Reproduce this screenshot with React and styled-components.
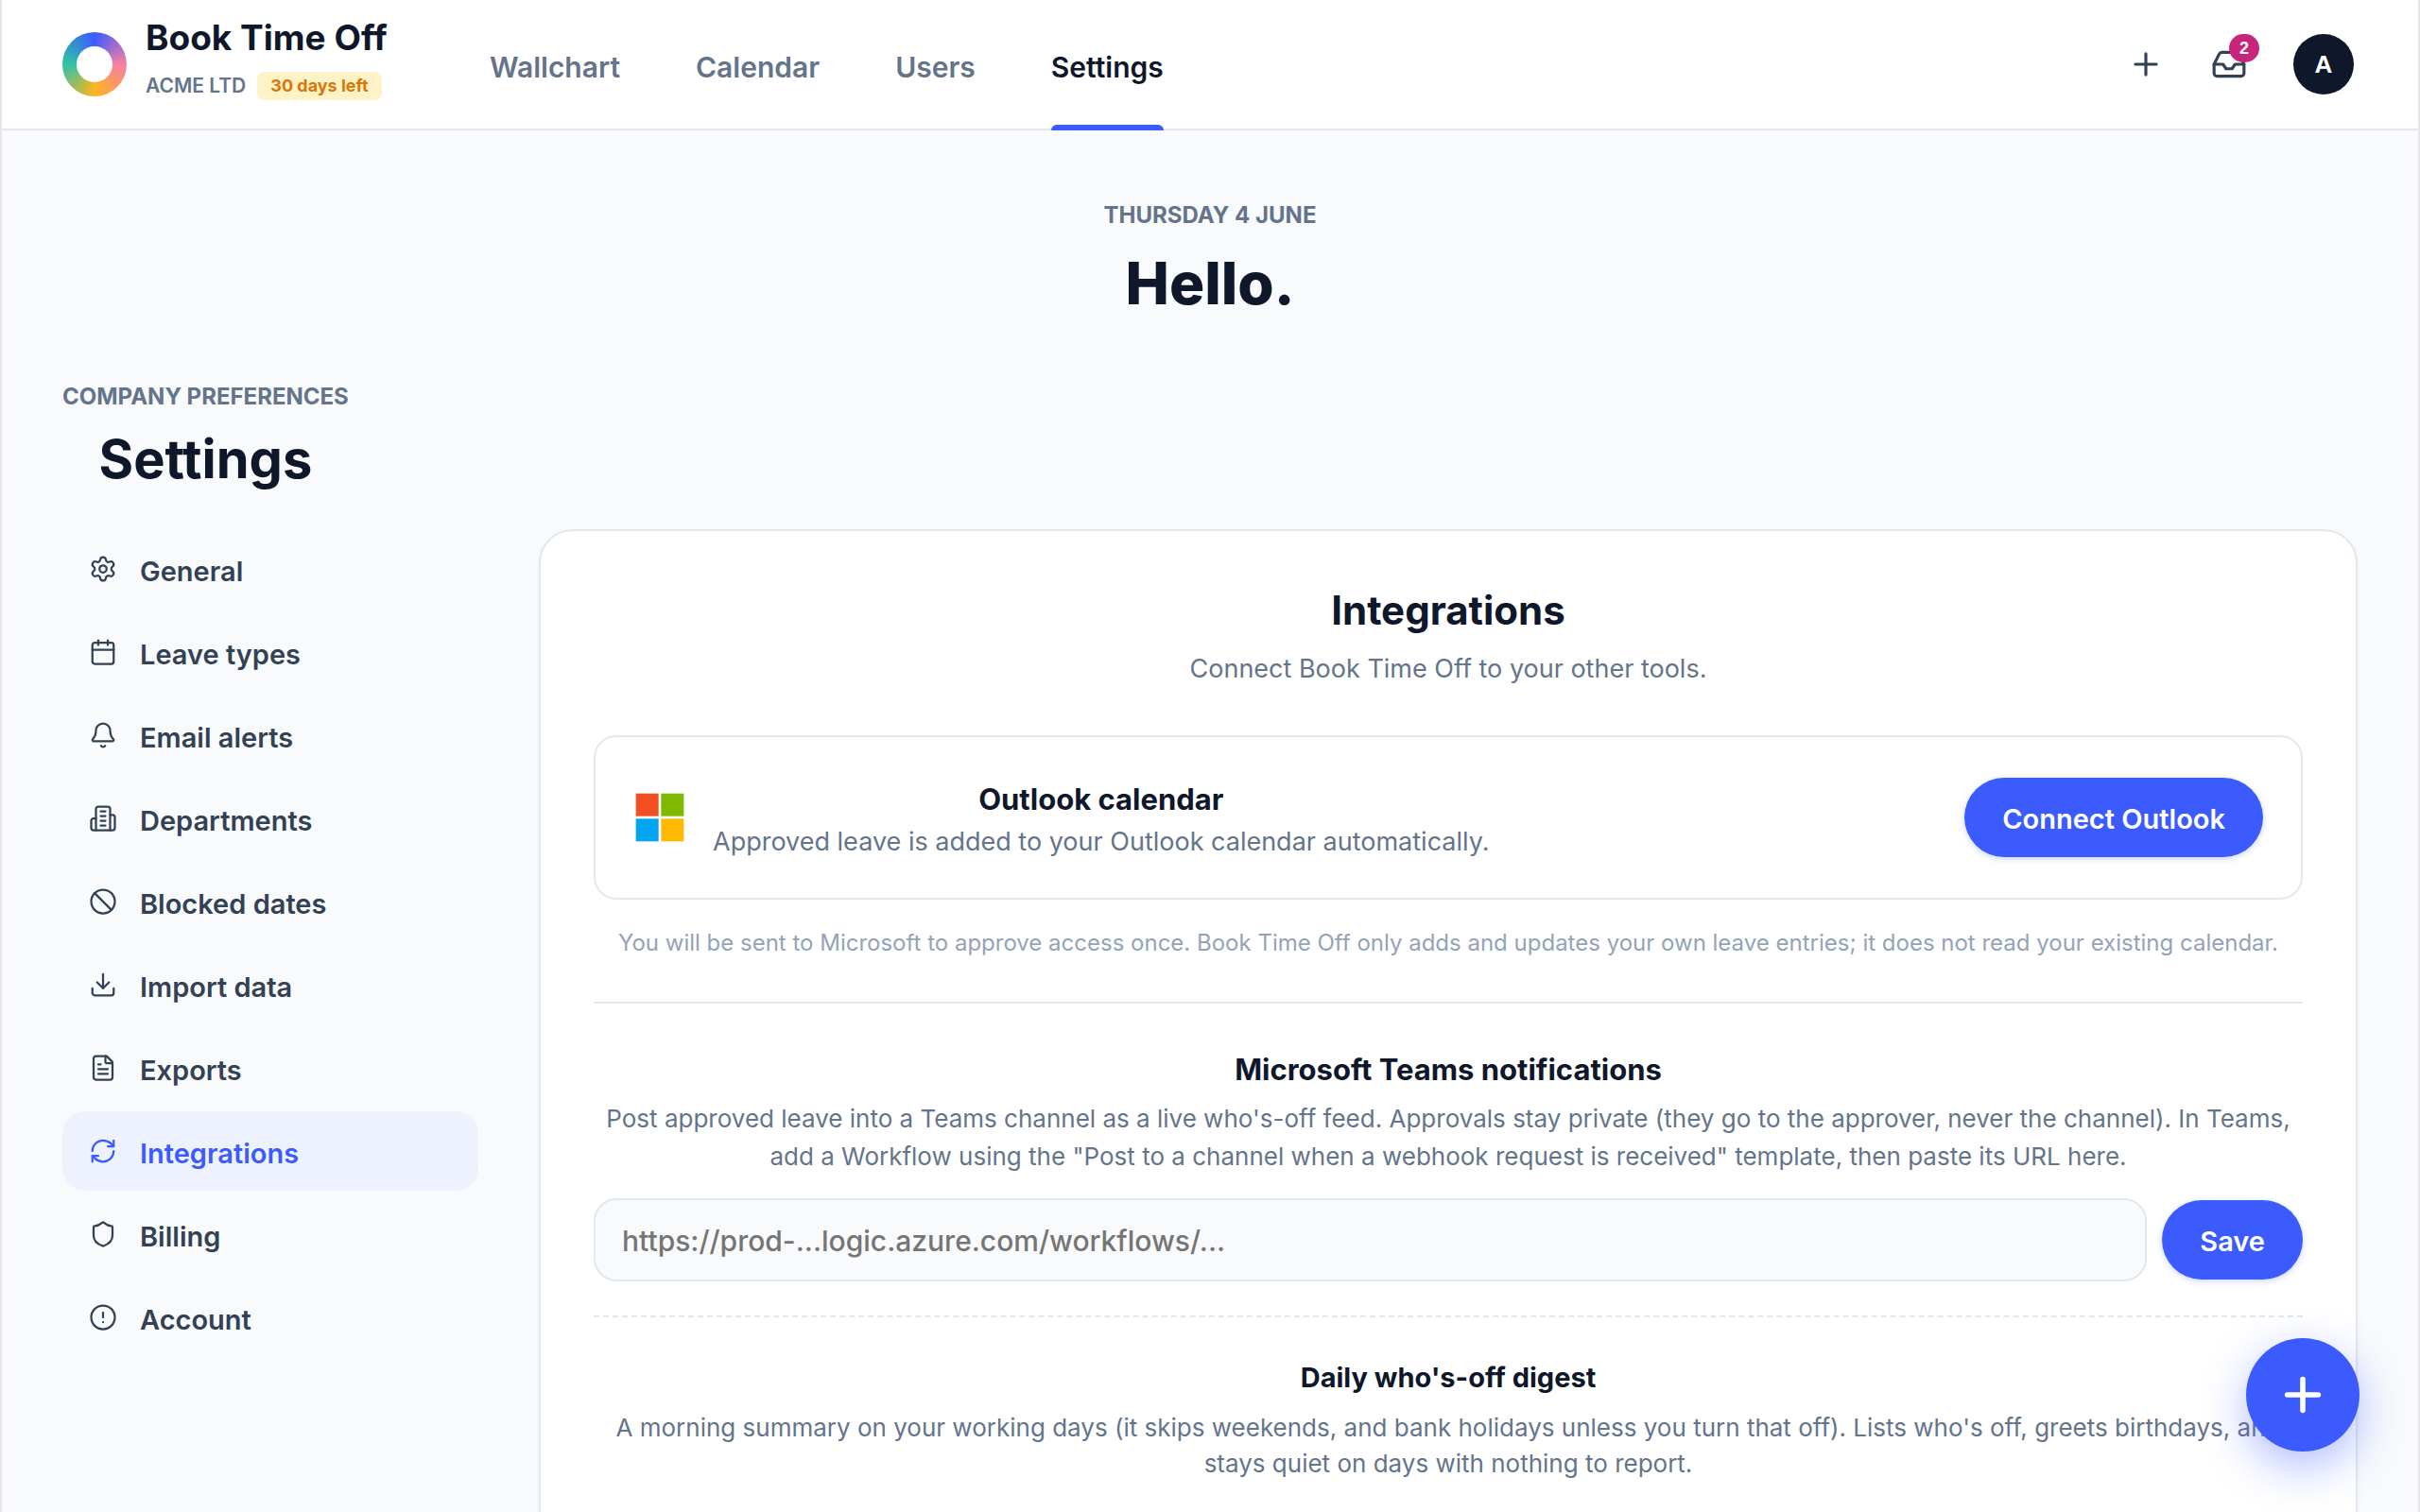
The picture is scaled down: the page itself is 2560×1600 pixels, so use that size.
import styled, { createGlobalStyle } from "styled-components";
import { Settings, Calendar, Bell, Ban, Download, FileText, RefreshCw, Shield, CircleAlert, Plus, Inbox } from "lucide-react";

const links = ["Wallchart", "Calendar", "Users", "Settings"];

const menu = [
    { label: "General", icon: Settings },
    { label: "Leave types", icon: Calendar },
    { label: "Email alerts", icon: Bell },
    { label: "Departments", icon: Building },
    { label: "Blocked dates", icon: Ban },
    { label: "Import data", icon: Download },
    { label: "Exports", icon: FileText },
    { label: "Integrations", icon: RefreshCw },
    { label: "Billing", icon: Shield },
    { label: "Account", icon: CircleAlert },
];

function Building({ size, strokeWidth }){
    return (
        <svg width={size} height={size} viewBox="0 0 24 24" fill="none" stroke="currentColor" strokeWidth={strokeWidth} strokeLinecap="round" strokeLinejoin="round">
            <path d="M6 22V4a2 2 0 0 1 2-2h8a2 2 0 0 1 2 2v18Z" />
            <path d="M6 12H4a2 2 0 0 0-2 2v6a2 2 0 0 0 2 2h2" />
            <path d="M18 9h2a2 2 0 0 1 2 2v9a2 2 0 0 1-2 2h-2" />
            <path d="M10 6h4M10 10h4M10 14h4M10 18h4" />
        </svg>
    );
}

function MicrosoftLogo(){
    return (
        <svg width="56" height="56" viewBox="0 0 21 21" aria-hidden="true">
            <rect x="1" y="1" width="9" height="9" fill="#f25022" />
            <rect x="11" y="1" width="9" height="9" fill="#7fba00" />
            <rect x="1" y="11" width="9" height="9" fill="#00a4ef" />
            <rect x="11" y="11" width="9" height="9" fill="#ffb900" />
        </svg>
    );
}

export default function App(){
    return (
        <Page>
            <GlobalStyle />
            <Header>
                <Ring />
                <Brand>
                    <BrandName>Book Time Off</BrandName>
                    <BrandInfo>
                        <Company>ACME LTD</Company>
                        <Trial>30 days left</Trial>
                    </BrandInfo>
                </Brand>
                <TopNav>
                    {links.map(l => <TopLink key={l} href="#" $active={l === "Settings"}>{l}</TopLink>)}
                </TopNav>
                <Actions>
                    <IconButton aria-label="Add"><Plus size={38} strokeWidth={2} /></IconButton>
                    <IconButton aria-label="Requests">
                        <Inbox size={38} strokeWidth={2} />
                        <Count>2</Count>
                    </IconButton>
                    <Avatar>A</Avatar>
                </Actions>
            </Header>
            <Main>
                <Hero>
                    <Eyebrow>THURSDAY 4 JUNE</Eyebrow>
                    <Greeting>Hello.</Greeting>
                </Hero>
                <PageHead>
                    <Eyebrow>COMPANY PREFERENCES</Eyebrow>
                    <PageTitle>Settings</PageTitle>
                </PageHead>
                <Columns>
                    <SideNav>
                        {menu.map(({ label, icon: Icon }) => (
                            <SideLink key={label} href="#" $active={label === "Integrations"}>
                                <Icon size={30} strokeWidth={1.8} />
                                <SideLabel>{label}</SideLabel>
                            </SideLink>
                        ))}
                    </SideNav>
                    <Card>
                        <CardTitle>Integrations</CardTitle>
                        <CardSubtitle>Connect Book Time Off to your other tools.</CardSubtitle>
                        <Provider>
                            <MicrosoftLogo />
                            <ProviderText>
                                <ProviderName>Outlook calendar</ProviderName>
                                <ProviderInfo>Approved leave is added to your Outlook calendar automatically.</ProviderInfo>
                            </ProviderText>
                            <Button>Connect Outlook</Button>
                        </Provider>
                        <Note>You will be sent to Microsoft to approve access once. Book Time Off only adds and updates your own leave entries; it does not read your existing calendar.</Note>
                        <Teams>
                            <TeamsTitle>Microsoft Teams notifications</TeamsTitle>
                            <TeamsInfo>Post approved leave into a Teams channel as a live who's-off feed. Approvals stay private (they go to the approver, never the channel). In Teams, add a Workflow using the "Post to a channel when a webhook request is received" template, then paste its URL here.</TeamsInfo>
                            <WebhookForm onSubmit={e => e.preventDefault()}>
                                <UrlInput type="url" aria-label="Teams workflow URL" placeholder="https://prod-...logic.azure.com/workflows/..." />
                                <Button type="submit">Save</Button>
                            </WebhookForm>
                        </Teams>
                        <Digest>
                            <DigestTitle>Daily who's-off digest</DigestTitle>
                            <DigestInfo>A morning summary on your working days (it skips weekends, and bank holidays unless you turn that off). Lists who's off, greets birthdays, and stays quiet on days with nothing to report.</DigestInfo>
                        </Digest>
                    </Card>
                </Columns>
            </Main>
            <Fab aria-label="Book time off"><Plus size={56} strokeWidth={2.4} /></Fab>
        </Page>
    );
}

const GlobalStyle = createGlobalStyle`
    *{
        box-sizing: border-box;
    }
    body{
        margin: 0;
        background-color: #F8FAFC;
        font-family: 'Inter', sans-serif;
        color: #0F172A;
    }
    h1, h2, h3, h4, p{
        margin: 0;
    }
    a{
        text-decoration: none;
    }
    button, input{
        font-family: inherit;
    }
    button{
        cursor: pointer;
    }
    svg{
        flex-shrink: 0;
    }
`;
const Page = styled.div`
    height: 100vh;
    display: flex;
    flex-direction: column;
    border: 0 solid #E5E5EA;
    border-width: 0 2px;
`;
const Header = styled.header`
    height: 138px;
    flex-shrink: 0;
    display: flex;
    align-items: center;
    padding: 0 64px;
    background-color: #FFFFFF;
    border-bottom: 2px solid #E2E8F0;
`;
const Ring = styled.div`
    width: 68px;
    height: 68px;
    border-radius: 50%;
    background: conic-gradient(#3B5BFF, #F77FA3 25%, #FDB51E 50%, #2EC4A6 75%, #3B5BFF);
    display: flex;
    align-items: center;
    justify-content: center;
    &::after{
        content: '';
        width: 38px;
        height: 38px;
        border-radius: 50%;
        background-color: #FFFFFF;
    }
`;
const Brand = styled.div`
    align-self: flex-start;
    padding-top: 10px;
    margin-left: 20px;
    min-width: 256px;
`;
const BrandName = styled.div`
    font-weight: 700;
    font-size: 37px;
    line-height: 60px;
    white-space: nowrap;
`;
const BrandInfo = styled.div`
    display: flex;
    align-items: center;
    gap: 12px;
    margin-top: 6px;
    white-space: nowrap;
`;
const Company = styled.span`
    font-weight: 600;
    font-size: 21px;
    line-height: 30px;
    color: #64748B;
`;
const Trial = styled.span`
    padding: 0 14px;
    border-radius: 8px;
    background-color: #FEF3C7;
    font-weight: 700;
    font-size: 18px;
    line-height: 30px;
    color: #D97706;
`;
const TopNav = styled.nav`
    align-self: stretch;
    display: flex;
    gap: 80px;
    margin-left: 108px;
    margin-bottom: -2px;
`;
const TopLink = styled.a`
    position: relative;
    display: flex;
    align-items: center;
    padding-top: 4px;
    font-weight: 600;
    font-size: 30px;
    color: ${props => props.$active ? '#0F172A' : '#64748B'};
    &::after{
        content: '';
        display: ${props => props.$active ? 'block' : 'none'};
        position: absolute;
        left: 0;
        right: 0;
        bottom: 0;
        height: 6px;
        border-radius: 6px 6px 0 0;
        background-color: #3B5BFF;
    }
`;
const Actions = styled.div`
    display: flex;
    align-items: center;
    gap: 16px;
    margin-left: auto;
    padding-right: 4px;
`;
const IconButton = styled.button`
    position: relative;
    width: 72px;
    height: 72px;
    padding: 0;
    display: flex;
    align-items: center;
    justify-content: center;
    border: none;
    background: none;
    color: #334155;
`;
const Count = styled.span`
    position: absolute;
    top: 4px;
    right: 4px;
    min-width: 32px;
    height: 30px;
    border-radius: 16px;
    background-color: #C7247B;
    font-family: 'Liberation Sans', sans-serif;
    font-weight: 700;
    font-size: 18px;
    line-height: 30px;
    text-align: center;
    color: #FFFFFF;
`;
const Avatar = styled.button`
    width: 64px;
    height: 64px;
    margin-left: 16px;
    padding: 0;
    border: none;
    border-radius: 50%;
    background-color: #0F172A;
    font-family: 'Liberation Sans', sans-serif;
    font-weight: 700;
    font-size: 26px;
    color: #FFFFFF;
`;
const Main = styled.main`
    flex: 1;
    min-height: 0;
    overflow-y: auto;
    scrollbar-width: none;
    padding: 74px 64px 64px 64px;
`;
const Hero = styled.div`
    text-align: center;
`;
const Eyebrow = styled.p`
    font-weight: 700;
    font-size: 24px;
    line-height: 32px;
    color: #64748B;
`;
const Greeting = styled.h1`
    margin-top: 16px;
    font-weight: 800;
    font-size: 62px;
    line-height: 80px;
`;
const PageHead = styled.div`
    width: fit-content;
    margin-top: 64px;
    text-align: center;
`;
const PageTitle = styled.h2`
    margin-top: 16px;
    font-weight: 700;
    font-size: 56px;
    line-height: 68px;
`;
const Columns = styled.div`
    display: grid;
    grid-template-columns: 440px minmax(0, 1fr);
    align-items: start;
    gap: 64px;
    margin-top: 40px;
`;
const SideNav = styled.nav`
    display: flex;
    flex-direction: column;
    gap: 4px;
`;
const SideLink = styled.a`
    height: 84px;
    display: flex;
    align-items: center;
    gap: 24px;
    padding: 0 28px;
    border-radius: 24px;
    font-weight: 600;
    font-size: 29px;
    color: ${props => props.$active ? '#3B5BFF' : '#334155'};
    background-color: ${props => props.$active ? '#EEF2FF' : 'transparent'};
`;
const SideLabel = styled.span`
    padding-top: 4px;
`;
const Card = styled.section`
    padding: 56px;
    border: 2px solid #E2E8F0;
    border-radius: 36px;
    background-color: #FFFFFF;
    box-shadow: 0 2px 6px rgba(15, 23, 42, 0.04);
    text-align: center;
`;
const CardTitle = styled.h3`
    font-weight: 700;
    font-size: 42px;
    line-height: 56px;
`;
const CardSubtitle = styled.p`
    margin-top: 14px;
    font-size: 27px;
    line-height: 40px;
    color: #64748B;
`;
const Provider = styled.div`
    display: flex;
    align-items: center;
    gap: 28px;
    margin-top: 50px;
    padding: 38px 40px;
    border: 2px solid #E2E8F0;
    border-radius: 24px;
`;
const ProviderText = styled.div`
    margin-right: auto;
    padding-top: 4px;
`;
const ProviderName = styled.h4`
    font-weight: 700;
    font-size: 31px;
    line-height: 48px;
`;
const ProviderInfo = styled.p`
    font-size: 27px;
    line-height: 42px;
    color: #64748B;
`;
const Button = styled.button`
    height: 84px;
    padding: 2px 40px 0 40px;
    border: none;
    border-radius: 42px;
    background-color: #3B5BFF;
    box-shadow: 0 2px 6px rgba(59, 91, 255, 0.25);
    font-weight: 600;
    font-size: 29px;
    white-space: nowrap;
    color: #FFFFFF;
`;
const Note = styled.p`
    margin-top: 28px;
    font-size: 24px;
    line-height: 36px;
    color: #94A3B8;
`;
const Teams = styled.section`
    margin-top: 44px;
    padding: 50px 0 36px 0;
    border-top: 2px solid #E2E8F0;
`;
const TeamsTitle = styled.h4`
    font-weight: 700;
    font-size: 31px;
    line-height: 40px;
`;
const TeamsInfo = styled.p`
    margin-top: 12px;
    font-size: 26px;
    line-height: 40px;
    color: #64748B;
`;
const WebhookForm = styled.form`
    display: flex;
    align-items: center;
    gap: 16px;
    margin-top: 24px;
`;
const UrlInput = styled.input`
    flex: 1;
    min-width: 0;
    height: 88px;
    padding: 2px 28px 0 28px;
    border: 2px solid #E2E8F0;
    border-radius: 24px;
    background-color: #F8FAFC;
    font-weight: 500;
    font-size: 30px;
    color: #0F172A;
    &::placeholder{
        color: #757575;
    }
`;
const Digest = styled.section`
    padding: 44px 0 80px 0;
    border-top: 2px dashed #E2E8F0;
`;
const DigestTitle = styled.h4`
    font-weight: 700;
    font-size: 29px;
    line-height: 40px;
`;
const DigestInfo = styled.p`
    margin-top: 14px;
    font-size: 26px;
    line-height: 38px;
    color: #64748B;
`;
const Fab = styled.button`
    position: fixed;
    right: 64px;
    bottom: 64px;
    width: 120px;
    height: 120px;
    padding: 0;
    display: flex;
    align-items: center;
    justify-content: center;
    border: none;
    border-radius: 50%;
    background-color: #3B5BFF;
    box-shadow: 0 16px 48px rgba(59, 91, 255, 0.4);
    color: #FFFFFF;
`;
